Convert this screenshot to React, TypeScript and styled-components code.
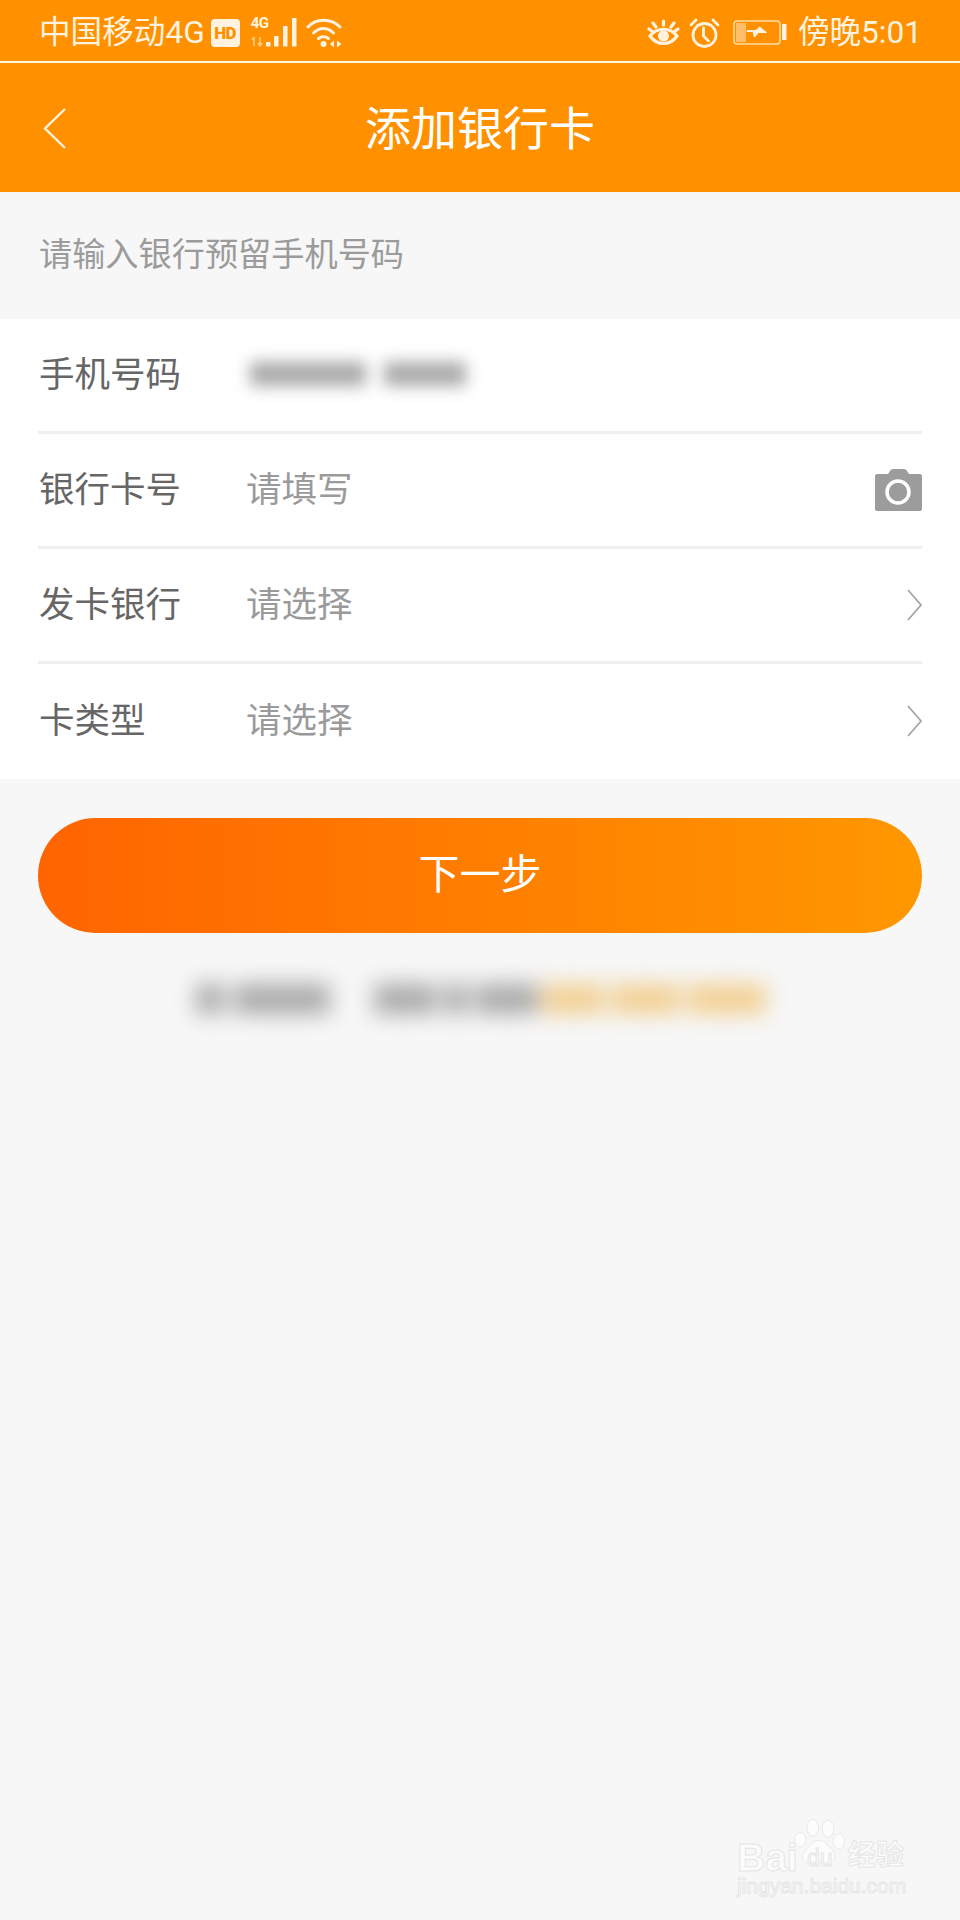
import React from "react";
import styled, { createGlobalStyle } from "styled-components";

const GlobalStyle = createGlobalStyle`
  html, body {
    margin: 0;
    padding: 0;
    background: #f7f7f7;
  }
  * {
    box-sizing: border-box;
  }
`;

const Page = styled.div`
  position: relative;
  width: 960px;
  height: 1920px;
  overflow: hidden;
  background: #f7f7f7;
  font-family: Roboto, "Noto Sans CJK SC", sans-serif;
`;

const Header = styled.header`
  background: #ff9000;
  color: #fff;
`;

const StatusBar = styled.div`
  height: 63px;
  padding: 4px 38px 0 39px;
  display: flex;
  align-items: center;
  justify-content: space-between;
  border-bottom: 2px solid #fff6e8;
`;

const StatusGroup = styled.div`
  display: flex;
  align-items: center;
`;

const StatusText = styled.span`
  font-size: 31.6px;
  line-height: 40px;
  color: #fff3df;
`;

const HdBadge = styled.span`
  width: 29px;
  height: 28px;
  margin-left: 6px;
  border-radius: 4px;
  background: #fff3df;
  color: #ff9000;
  font-size: 17px;
  font-weight: 900;
  line-height: 28px;
  text-align: center;
  letter-spacing: -0.5px;
`;

const SignalBox = styled.div`
  position: relative;
  width: 48px;
  height: 30px;
  margin-left: 11px;
`;

const SignalLabel = styled.span`
  position: absolute;
  left: 0;
  top: -3px;
  font-size: 15px;
  font-weight: 700;
  line-height: 16px;
  letter-spacing: -0.5px;
  color: #fff3df;
`;

const NavBar = styled.div`
  position: relative;
  height: 129px;
  padding-top: 2px;
  display: flex;
  align-items: center;
  justify-content: center;
`;

const BackIcon = styled.svg`
  position: absolute;
  left: 43px;
  top: 45px;
`;

const Title = styled.h1`
  margin: 0;
  font-size: 46px;
  font-weight: 400;
  line-height: 60px;
  color: #fff;
`;

const Hint = styled.div`
  height: 127px;
  padding: 0 39px 9px;
  display: flex;
  align-items: center;
  font-size: 33.2px;
  color: #9b9b9b;
`;

const Card = styled.section`
  background: #fff;
`;

const Row = styled.div<{ $last?: boolean }>`
  height: 115px;
  margin: 0 38px;
  padding-bottom: ${(props) => (props.$last ? 9 : 8)}px;
  display: flex;
  align-items: center;
  border-bottom: ${(props) => (props.$last ? "none" : "3px solid #efefef")};
`;

const Label = styled.span`
  width: 208px;
  padding-left: 1px;
  flex-shrink: 0;
  font-size: 35.5px;
  color: #666;
`;

const Placeholder = styled.span`
  flex: 1;
  font-size: 35.5px;
  color: #9a9a9a;
`;

const RowIcon = styled.svg`
  flex-shrink: 0;
  margin-top: 8px;
`;

const BlurredValue = styled.div`
  flex: 1;
  display: flex;
  margin-top: 5px;
  padding-left: 4px;
  filter: blur(8px);
`;

const HelpLine = styled.div`
  margin-top: 51px;
  padding-left: 196px;
  display: flex;
  align-items: center;
  filter: blur(11px);
`;

const Smudge = styled.span<{ $w: number; $gap: number; $h: number; $orange?: boolean }>`
  display: block;
  flex-shrink: 0;
  width: ${(props) => props.$w}px;
  height: ${(props) => props.$h}px;
  margin-left: ${(props) => props.$gap}px;
  background: ${(props) => (props.$orange ? "#f2cf92" : "#a9a9a9")};
`;

const NextButton = styled.button`
  display: block;
  width: 884px;
  height: 115px;
  margin: 39px 38px 0;
  padding: 0 0 10px;
  border: none;
  border-radius: 58px;
  background: linear-gradient(90deg, #ff6400 0%, #ff9800 100%);
  color: #fff;
  font-family: inherit;
  font-size: 41px;
  font-weight: 400;
`;

const Watermark = styled.div`
  position: absolute;
  left: 735px;
  top: 1816px;
  width: 175px;
  height: 86px;
`;

const WatermarkWord = styled.span<{ $x: number; $y: number; $size: number; $weight?: number }>`
  position: absolute;
  left: ${(props) => props.$x}px;
  top: ${(props) => props.$y}px;
  font-family: "Liberation Sans", "Noto Sans CJK SC", sans-serif;
  font-size: ${(props) => props.$size}px;
  font-weight: ${(props) => props.$weight ?? 400};
  line-height: 0.85;
  white-space: nowrap;
  color: #fcfcfc;
  -webkit-text-stroke: 1px #e6e6e6;
`;

const PawIcon = styled.svg`
  position: absolute;
  left: 59px;
  top: 2px;
`;

// 휴대폰 번호와 하단 안내문은 원본에서 모자이크 처리되어 있음
const phoneSmudges = [
  { w: 116, gap: 0 },
  { w: 82, gap: 18 },
];

const helpSmudges = [
  { w: 28, gap: 0 },
  { w: 96, gap: 10 },
  { w: 62, gap: 44 },
  { w: 24, gap: 8 },
  { w: 62, gap: 8 },
  { w: 62, gap: 4, orange: true },
  { w: 68, gap: 8, orange: true },
  { w: 78, gap: 8, orange: true },
];

const StatusIcons = () => (
  <>
    <SignalBox>
      <SignalLabel>4G</SignalLabel>
      <svg width="48" height="30" viewBox="0 0 48 30" style={{ display: "block" }}>
        <path d="M3 19v9M1 22l2-3" stroke="#ffc674" strokeWidth="1.800" fill="none" />
        <path d="M9 19v9M7 25l2 3 2-3" stroke="#ffc674" strokeWidth="1.800" fill="none" />
        <rect x="15" y="24" width="4.500" height="4.500" fill="#fff3df" />
        <rect x="23" y="18" width="4.500" height="10.500" fill="#fff3df" />
        <rect x="32" y="8" width="4.500" height="20.500" fill="#fff3df" />
        <rect x="41" y="0" width="4.500" height="28.500" fill="#fff3df" />
      </svg>
    </SignalBox>
    <svg width="36" height="30" viewBox="0 0 36 30" style={{ marginLeft: 7 }}>
      <g fill="none" stroke="#fff3df" strokeWidth="3" strokeLinecap="round">
        <path d="M2 9C10 0 25 0 34 9" />
        <path d="M7.500 15c6-6 14-6 20 0" />
        <path d="M12.500 20.500c3-2.500 7-2.500 10 0" />
      </g>
      <circle cx="17.500" cy="26" r="3" fill="#fff3df" />
      <path d="M24 26l4-3.500v7zM35.500 26l-4.500-3.500v7z" fill="#fff3df" />
    </svg>
  </>
);

const RightIcons = () => (
  <>
    <svg width="33" height="30" viewBox="0 0 33 30" style={{ marginRight: 9 }}>
      <g fill="none" stroke="#fff3df" strokeWidth="3.200" strokeLinecap="round">
        <path d="M3 18c7-9 20-9 27 0-7 10-20 10-27 0z" />
        <path d="M16.500 3v4M6 5l3 4M27 5l-3 4M2 11l4 3M31 11l-4 3" />
      </g>
      <circle cx="16.500" cy="18" r="5.500" fill="#fff3df" />
    </svg>
    <svg width="31" height="30" viewBox="0 0 31 30" style={{ marginRight: 13 }}>
      <g fill="none" stroke="#fff3df" strokeWidth="2.800" strokeLinecap="round">
        <circle cx="15.500" cy="17" r="11.500" />
        <path d="M14.500 10v8l5 5" />
        <path d="M2 7l5-5M29 7l-5-5" />
      </g>
    </svg>
    <svg width="54" height="25" viewBox="0 0 54 25" style={{ marginRight: 11 }}>
      <rect x="1" y="1" width="46" height="23" rx="3" fill="none" stroke="#ffdca4" strokeWidth="1.600" />
      <rect x="3" y="3" width="10" height="19" fill="#ffbe68" />
      <path
        d="M14 10.500h9l3.500-3.500 7 5.500h-8l-4 4.500-1.500-5.500h-6z"
        fill="#fff3df"
        stroke="#fff3df"
        strokeWidth="1"
      />
      <rect x="49" y="4" width="4.500" height="16" rx="1" fill="#fff3df" />
    </svg>
  </>
);

const CameraIcon = () => (
  <RowIcon width="47" height="42" viewBox="0 0 47 42">
    <path
      d="M2 5h11l2-3c.5-1 1.500-2 3-2h11c1.500 0 2.500 1 3 2l2 3h11c1 0 2 1 2 2v33c0 1-1 2-2 2H2c-1 0-2-1-2-2V7c0-1 1-2 2-2z"
      fill="#9c9c9c"
    />
    <circle cx="23" cy="23" r="11" fill="none" stroke="#fff" strokeWidth="3.500" />
  </RowIcon>
);

const ChevronIcon = () => (
  <RowIcon width="15" height="32" viewBox="0 0 15 32">
    <path d="M1 1l13 15L1 31" fill="none" stroke="#a6a6a6" strokeWidth="1.800" />
  </RowIcon>
);

const App = () => {
  return (
    <Page>
      <GlobalStyle />
      <Header>
        <StatusBar>
          <StatusGroup>
            <StatusText>中国移动4G</StatusText>
            <HdBadge>HD</HdBadge>
            <StatusIcons />
          </StatusGroup>
          <StatusGroup>
            <RightIcons />
            <StatusText>傍晚5:01</StatusText>
          </StatusGroup>
        </StatusBar>
        <NavBar>
          <BackIcon width="24" height="41" viewBox="0 0 24 41">
            <path d="M22 1L2 20.500 22 40" fill="none" stroke="#fff3df" strokeWidth="2.400" />
          </BackIcon>
          <Title>添加银行卡</Title>
        </NavBar>
      </Header>

      <Hint>请输入银行预留手机号码</Hint>

      <Card>
        <Row>
          <Label>手机号码</Label>
          <BlurredValue>
            {phoneSmudges.map((item, i) => (
              <Smudge key={i} $w={item.w} $gap={item.gap} $h={24} />
            ))}
          </BlurredValue>
        </Row>
        <Row>
          <Label>银行卡号</Label>
          <Placeholder>请填写</Placeholder>
          <CameraIcon />
        </Row>
        <Row>
          <Label>发卡银行</Label>
          <Placeholder>请选择</Placeholder>
          <ChevronIcon />
        </Row>
        <Row $last>
          <Label>卡类型</Label>
          <Placeholder>请选择</Placeholder>
          <ChevronIcon />
        </Row>
      </Card>

      <NextButton>下一步</NextButton>

      <HelpLine>
        {helpSmudges.map((item, i) => (
          <Smudge key={i} $w={item.w} $gap={item.gap} $h={30} $orange={item.orange} />
        ))}
      </HelpLine>

      <Watermark>
        <WatermarkWord $x={2} $y={25} $size={39} $weight={700}>
          Bai
        </WatermarkWord>
        <PawIcon width="52" height="52" viewBox="0 0 58 58">
          <g fill="#fcfcfc" stroke="#e6e6e6" strokeWidth="1">
            <ellipse cx="7" cy="24" rx="6.500" ry="8" />
            <ellipse cx="21" cy="11" rx="6.500" ry="9.500" />
            <ellipse cx="38" cy="12" rx="6.500" ry="9.500" />
            <ellipse cx="50" cy="26" rx="6.500" ry="8.500" />
            <path d="M28 25c7 0 10 6 15 11 5 6 3 14-6 14-4 0-6-1-9-1s-6 1-10 1c-9 0-11-8-5-14 5-5 8-11 15-11z" />
          </g>
        </PawIcon>
        <WatermarkWord $x={72} $y={33} $size={23}>
          du
        </WatermarkWord>
        <WatermarkWord $x={113} $y={28} $size={28} $weight={700}>
          经验
        </WatermarkWord>
        <WatermarkWord $x={2} $y={61} $size={21}>
          jingyan.baidu.com
        </WatermarkWord>
      </Watermark>
    </Page>
  );
};

export default App;
